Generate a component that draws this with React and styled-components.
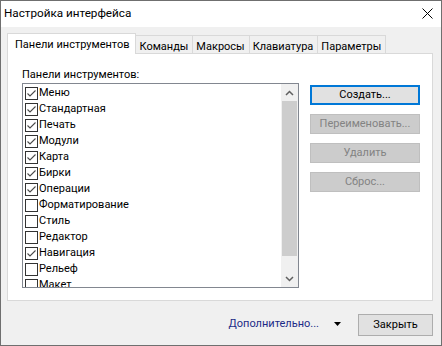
import React from 'react';
import styled, { createGlobalStyle } from 'styled-components';

const Global = createGlobalStyle`
  html, body { margin: 0; padding: 0; background: #f0f0f0; }
  body {
    font-family: Roboto, "Segoe UI", sans-serif;
    font-size: 11px;
    color: #000;
  }
  * { box-sizing: border-box; }
`;

const Window = styled.div`
  width: 442px;
  height: 346px;
  border: 1px solid #6f6f6f;
  display: flex;
  flex-direction: column;
  background: #f0f0f0;
`;

const TitleBar = styled.div`
  height: 26px;
  background: #fff;
  display: flex;
  align-items: center;
  justify-content: space-between;
  padding: 0 8px 2px 3px;
`;

const Title = styled.span`
  font-size: 11.7px;
  line-height: 15px;
`;

const CloseIcon = styled.svg`
  width: 11px;
  height: 11px;
  display: block;
`;

const Body = styled.div`
  flex: 1;
  display: flex;
  flex-direction: column;
  padding: 6px 8px 0 6px;
`;

const TabRow = styled.div`
  display: flex;
  align-items: flex-end;
  height: 21px;
  margin-bottom: -1px;
  position: relative;
  z-index: 1;
`;

const Tab = styled.div`
  line-height: 15px;
  white-space: nowrap;
  border-top: 1px solid #d9d9d9;
  border-right: 1px solid #d9d9d9;
  border-left: ${p => (p.$active ? '1px solid #d9d9d9' : 'none')};
  background: ${p => (p.$active ? '#fff' : '#f0f0f0')};
  height: ${p => (p.$active ? '21px' : '18px')};
  margin-bottom: ${p => (p.$active ? '0' : '1px')};
  padding: ${p => (p.$active ? '3px 6px 0 7px' : '3px 4px 0 3px')};
`;

const Panel = styled.div`
  height: 248px;
  border: 1px solid #d9d9d9;
  background: #fff;
  padding: 13px 0 0 14px;
`;

const Label = styled.div`
  line-height: 15px;
  margin-bottom: 1px;
`;

const ContentRow = styled.div`
  display: flex;
  align-items: flex-start;
`;

const ListBox = styled.div`
  width: 277px;
  height: 205px;
  border: 1px solid #828790;
  background: #fff;
  display: flex;
`;

const Items = styled.div`
  flex: 1;
  overflow: hidden;
  padding-top: 1px;
`;

const Item = styled.div`
  height: 16px;
  display: flex;
  align-items: center;
  padding-left: 2px;
  white-space: nowrap;
`;

const Box = styled.span`
  width: 13px;
  height: 13px;
  border: 1px solid #333;
  background: #fff;
  flex: none;
  display: flex;
  align-items: center;
  justify-content: center;
`;

const ItemText = styled.span`
  margin-left: 1px;
  line-height: 16px;
`;

const ScrollBar = styled.div`
  width: 17px;
  display: flex;
  flex-direction: column;
  background: #f0f0f0;
`;

const ScrollBtn = styled.div`
  height: 17px;
  display: flex;
  align-items: center;
  justify-content: center;
  flex: none;
`;

const Thumb = styled.div`
  height: 155px;
  margin: 0 1px;
  background: #cdcdcd;
  flex: none;
`;

const Track = styled.div`
  flex: 1;
`;

const ButtonCol = styled.div`
  display: flex;
  flex-direction: column;
  gap: 9px;
  margin-left: 11px;
  margin-top: 2px;
`;

const Button = styled.div`
  width: ${p => p.$w || 110}px;
  height: ${p => p.$h || 20}px;
  display: flex;
  align-items: center;
  justify-content: center;
  line-height: 15px;
  padding-bottom: 1px;
  background: ${p => (p.$disabled ? '#cccccc' : '#e1e1e1')};
  color: ${p => (p.$disabled ? '#838383' : '#000')};
  border: ${p =>
    p.$default ? '2px solid #0078d7' : p.$disabled ? '1px solid #bfbfbf' : '1px solid #adadad'};
`;

const Footer = styled.div`
  flex: 1;
  display: flex;
  justify-content: flex-end;
  align-items: flex-start;
  padding-top: 13px;
`;

const More = styled.div`
  height: 22px;
  display: flex;
  align-items: center;
  gap: 15px;
  margin-right: 17px;
  color: #1c2b87;
  padding-bottom: 3px;
`;

const Check = () => (
  <svg width="11" height="11" viewBox="0 0 11 11">
    <polyline points="1.5,5.5 4,8 9.5,2.5" fill="none" stroke="#4a4a4a" strokeWidth="1.1" />
  </svg>
);

const items = [
  ['Меню', true],
  ['Стандартная', true],
  ['Печать', true],
  ['Модули', true],
  ['Карта', true],
  ['Бирки', true],
  ['Операции', true],
  ['Форматирование', false],
  ['Стиль', false],
  ['Редактор', false],
  ['Навигация', true],
  ['Рельеф', false],
  ['Макет', false],
];

const tabs = ['Панели инструментов', 'Команды', 'Макросы', 'Клавиатура', 'Параметры'];

export default function App() {
  return (
    <>
      <Global />
      <Window>
        <TitleBar>
          <Title>Настройка интерфейса</Title>
          <CloseIcon viewBox="0 0 11 11">
            <path d="M0.5 0.5 L10.5 10.5 M10.5 0.5 L0.5 10.5" stroke="#000" strokeWidth="1" fill="none" />
          </CloseIcon>
        </TitleBar>
        <Body>
          <TabRow>
            {tabs.map((t, i) => (
              <Tab key={t} $active={i === 0}>{t}</Tab>
            ))}
          </TabRow>
          <Panel>
            <Label>Панели инструментов:</Label>
            <ContentRow>
              <ListBox>
                <Items>
                  {items.map(([name, on]) => (
                    <Item key={name}>
                      <Box>{on && <Check />}</Box>
                      <ItemText>{name}</ItemText>
                    </Item>
                  ))}
                </Items>
                <ScrollBar>
                  <ScrollBtn>
                    <svg width="9" height="6" viewBox="0 0 9 6">
                      <polyline points="1,5 4.5,1.5 8,5" fill="none" stroke="#606060" strokeWidth="1.5" />
                    </svg>
                  </ScrollBtn>
                  <Thumb />
                  <Track />
                  <ScrollBtn>
                    <svg width="9" height="6" viewBox="0 0 9 6">
                      <polyline points="1,1 4.5,4.5 8,1" fill="none" stroke="#606060" strokeWidth="1.5" />
                    </svg>
                  </ScrollBtn>
                </ScrollBar>
              </ListBox>
              <ButtonCol>
                <Button $default>Создать...</Button>
                <Button $disabled>Переименовать...</Button>
                <Button $disabled>Удалить</Button>
                <Button $disabled>Сброс...</Button>
              </ButtonCol>
            </ContentRow>
          </Panel>
          <Footer>
            <More>
              <span>Дополнительно...</span>
              <svg width="7" height="4" viewBox="0 0 7 4">
                <polygon points="0,0 7,0 3.5,4" fill="#000" />
              </svg>
            </More>
            <Button $w={75} $h={22}>Закрыть</Button>
          </Footer>
        </Body>
      </Window>
    </>
  );
}
